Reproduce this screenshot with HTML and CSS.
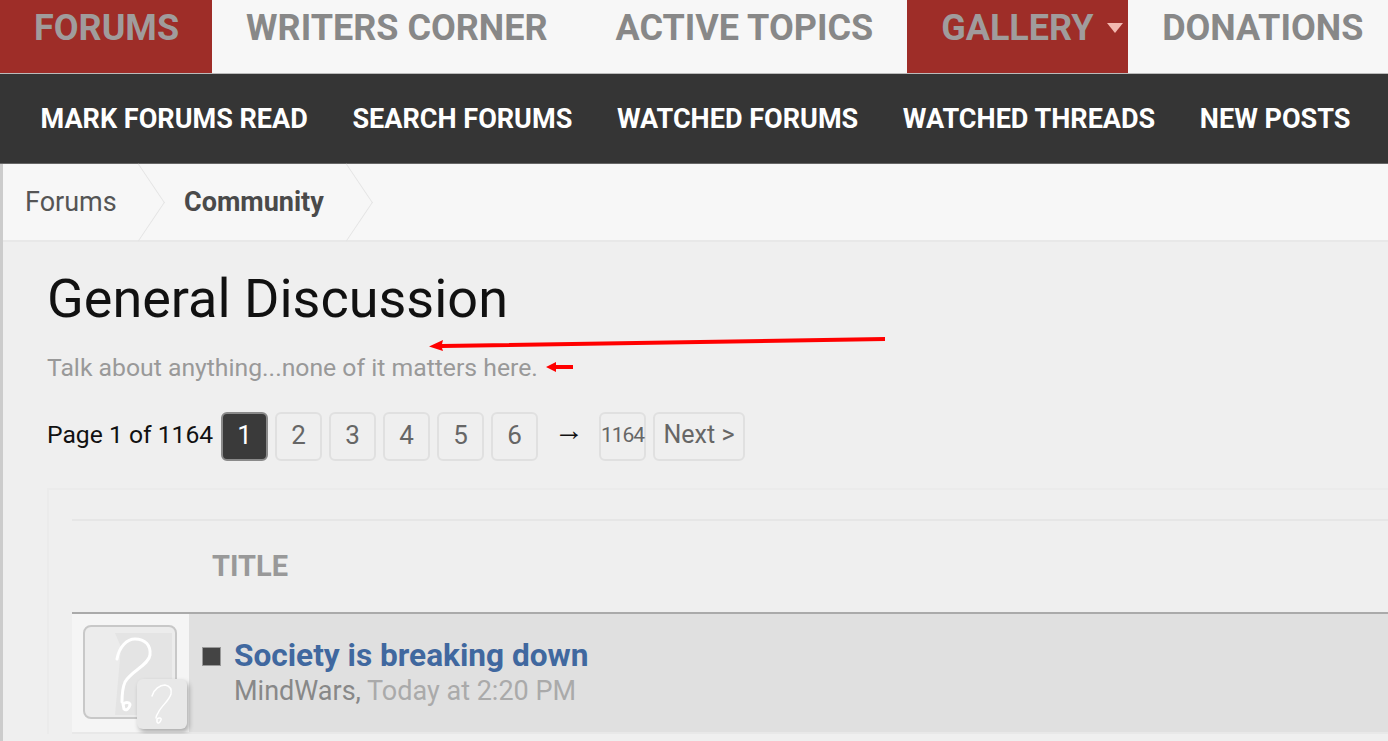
FILE: index.html
```html
<!DOCTYPE html>
<html lang="en">
<head>
    <meta charset="UTF-8">
    <meta name="viewport" content="width=device-width, initial-scale=1.0">
    <title>General Discussion - Forums</title>
    <link rel="stylesheet" href="styles.css">
</head>
<body>
    <nav class="main-nav">
        <a class="main-link active first">FORUMS</a>
        <a class="main-link">WRITERS CORNER</a>
        <a class="main-link">ACTIVE TOPICS</a>
        <a class="main-link active gallery">GALLERY<span class="caret"></span></a>
        <a class="main-link">DONATIONS</a>
    </nav>

    <nav class="sub-nav">
        <a>MARK FORUMS READ</a>
        <a>SEARCH FORUMS</a>
        <a>WATCHED FORUMS</a>
        <a>WATCHED THREADS</a>
        <a>NEW POSTS</a>
    </nav>

    <div class="content">
        <div class="breadcrumb">
            <a class="crumb">Forums</a>
            <a class="crumb current">Community</a>
        </div>

        <div class="main">
            <h1>General Discussion</h1>
            <p class="description">Talk about anything...none of it matters here.</p>

            <div class="pager">
                <span class="page-label">Page 1 of 1164</span>
                <a class="page-btn selected">1</a>
                <a class="page-btn">2</a>
                <a class="page-btn">3</a>
                <a class="page-btn">4</a>
                <a class="page-btn">5</a>
                <a class="page-btn">6</a>
                <span class="page-skip">&#8594;</span>
                <a class="page-btn small">1164</a>
                <a class="page-btn next">Next &gt;</a>
            </div>

            <div class="panel">
                <div class="thread-list">
                    <div class="list-head">TITLE</div>
                    <div class="thread">
                        <div class="thread-avatar">
                            <div class="avatar">
                                <svg viewBox="0 0 90 90" fill="none" stroke="#fff" stroke-width="3" stroke-linecap="round" stroke-linejoin="round">
                                    <polygon class="avatar-fill" points="30,6 87,6 87,88 30,88 36,20"/>
                                    <path d="M32 32C34 20 42 12 50 12C60 12 66 18 65 28C64 38 46 44 40 55C37 62 37 68 37 75"/>
                                    <path d="M38 77C41 75 45 75 45 78C44 82 41 84 39 82Z"/>
                                </svg>
                            </div>
                            <div class="avatar-small">
                                <svg viewBox="0 0 50 50" fill="none" stroke="#fff" stroke-width="1.5" stroke-linecap="round" stroke-linejoin="round">
                                    <path d="M15 17C17 10 23 6 28 6C33 7 35 10 34 15C32 22 24 27 21 34C20 36 19 37 19 39"/>
                                    <path d="M20 40C22 38 25 39 24 41C23 44 21 45 20 43Z"/>
                                </svg>
                            </div>
                        </div>
                        <div class="thread-main">
                            <span class="thread-bullet"></span>
                            <div class="thread-text">
                                <a class="thread-title">Society is breaking down</a>
                                <div class="thread-meta"><span class="author">MindWars,</span> Today at 2:20 PM</div>
                            </div>
                        </div>
                    </div>
                </div>
            </div>
        </div>

        <!-- red arrows someone drew over the screenshot -->
        <svg class="markup long" viewBox="0 0 460 14" fill="#f00">
            <polygon points="0,9.5 14,3 13,7 456,0 456,4 13,11 14,14"/>
        </svg>
        <svg class="markup short" viewBox="0 0 28 10" fill="#f00">
            <polygon points="0,5 10,0 10,3 27,3 27,7 10,7 10,10"/>
        </svg>
    </div>
</body>
</html>
```

FILE: styles.css
```css
* {
    margin: 0;
    padding: 0;
    box-sizing: border-box;
}

html, body {
    height: 741px;
    overflow: hidden;
}

body {
    font-family: Roboto, "Liberation Sans", sans-serif;
    background: #efefef;
    color: #111;
}

.main-nav {
    display: flex;
    height: 74px;
    background: #f7f7f7;
    border-bottom: 1px solid #bbb;
}

.main-link {
    flex: none;
    display: block;
    height: 73px;
    padding: 8px 34px 0;
    font-size: 36px;
    line-height: 40px;
    font-weight: 700;
    color: #888;
    white-space: nowrap;
}

.main-link.first {
    padding-right: 33px;
}

.main-link.active {
    background: #9e2d28;
    color: #a09c9c;
}

.main-link.gallery {
    display: flex;
    padding-right: 0;
    width: 221px;
}

.caret {
    width: 0;
    height: 0;
    margin: 15px 0 0 13px;
    border: 8px solid transparent;
    border-top: 10px solid #f2b8b0;
    border-bottom: 0;
}

.sub-nav {
    display: flex;
    gap: 44.6px;
    height: 90px;
    padding: 0 40.5px;
    align-items: center;
    background: #353535;
    border-bottom: 1px solid #666;
}

.sub-nav a {
    font-size: 27.05px;
    font-weight: 700;
    color: #fff;
    white-space: nowrap;
}

.content {
    position: relative;
    height: 577px;
    border-left: 3px solid #ccc;
}

.breadcrumb {
    display: flex;
    height: 78px;
    background: #f7f7f7;
    border-bottom: 2px solid #e8e8e8;
}

.crumb {
    position: relative;
    display: flex;
    align-items: center;
    height: 76px;
    padding-left: 22px;
    width: 159px;
    font-size: 27px;
    color: #555;
}

.crumb.current {
    width: 208px;
    font-weight: 700;
    color: #4a4a4a;
}

.crumb::after {
    content: "";
    position: absolute;
    top: 11px;
    right: -4px;
    width: 54px;
    height: 54px;
    border-top: 1px solid #e3e3e3;
    border-right: 1px solid #e3e3e3;
    transform: scaleX(0.675) rotate(45deg);
}

.main {
    padding: 25px 0 0 44px;
}

h1 {
    font-size: 54px;
    line-height: 64px;
    font-weight: 400;
    color: #111;
}

.description {
    margin-top: 22px;
    font-size: 24.75px;
    line-height: 30px;
    color: #999;
}

.pager {
    display: flex;
    align-items: center;
    height: 48px;
    margin-top: 29px;
}

.page-label {
    flex: none;
    width: 174px;
    padding-bottom: 3px;
    font-size: 24.7px;
    white-space: nowrap;
}

.page-btn {
    flex: none;
    display: flex;
    align-items: center;
    justify-content: center;
    width: 47px;
    height: 49px;
    margin-right: 7px;
    padding-bottom: 3px;
    font-size: 26px;
    color: #666;
    background: #efefef;
    border: 2px solid #e0e0e0;
    border-radius: 6px;
}

.page-btn.selected {
    background: #3a3a3a;
    border-color: #8a8a8a;
    color: #fff;
}

.page-btn.small {
    font-size: 21px;
    letter-spacing: -1px;
}

.page-btn.next {
    width: 92px;
    margin-right: 0;
    font-size: 25px;
}

.page-skip {
    flex: none;
    width: 54px;
    padding: 0 6px 14px 0;
    text-align: center;
    font-size: 30px;
    font-weight: 700;
    color: #111;
}

.panel {
    margin-top: 28px;
    padding: 29px 0 0 23px;
    border-top: 2px solid #ebebeb;
    border-left: 2px solid #ebebeb;
    overflow: hidden;
}

.thread-list {
    border-top: 2px solid #e6e6e6;
}

.list-head {
    height: 93px;
    padding: 28px 0 0 140px;
    font-size: 29px;
    line-height: 34px;
    font-weight: 700;
    color: #999;
    border-bottom: 2px solid #aaa;
}

.thread {
    display: flex;
    height: 120px;
    border-bottom: 2px solid #e8e8e8;
}

.thread-avatar {
    position: relative;
    flex: none;
    width: 117px;
    padding: 11px 0 0 11px;
    background: #f5f5f5;
}

.avatar {
    width: 94px;
    height: 94px;
    background: #ececec;
    border: 2px solid #c8c8c8;
    border-radius: 8px;
}

.avatar svg {
    display: block;
    width: 100%;
    height: 100%;
}

.avatar-fill {
    fill: #e4e4e4;
    stroke: none;
}

.avatar-small {
    position: absolute;
    left: 65px;
    top: 65px;
    width: 50px;
    height: 50px;
    background: #e8e8e8;
    border-radius: 6px;
    box-shadow: 2px 3px 5px rgba(0, 0, 0, 0.3);
}

.avatar-small svg {
    display: block;
    width: 100%;
    height: 100%;
}

.thread-main {
    flex: 1;
    display: flex;
    align-items: flex-start;
    padding: 24px 0 0 13px;
    background: #e0e0e0;
}

.thread-bullet {
    flex: none;
    width: 19px;
    height: 19px;
    margin: 9px 13px 0 0;
    background: #444;
    border: 1px solid #999;
}

.thread-title {
    display: block;
    font-size: 31.6px;
    line-height: 35px;
    font-weight: 700;
    color: #40689f;
}

.thread-meta {
    padding-top: 1px;
    font-size: 27px;
    line-height: 34px;
    color: #aaa;
}

.author {
    color: #888;
}

.markup {
    position: absolute;
    display: block;
}

.markup.long {
    left: 426px;
    top: 173px;
    width: 460px;
    height: 14px;
}

.markup.short {
    left: 543px;
    top: 198px;
    width: 28px;
    height: 10px;
}
```
